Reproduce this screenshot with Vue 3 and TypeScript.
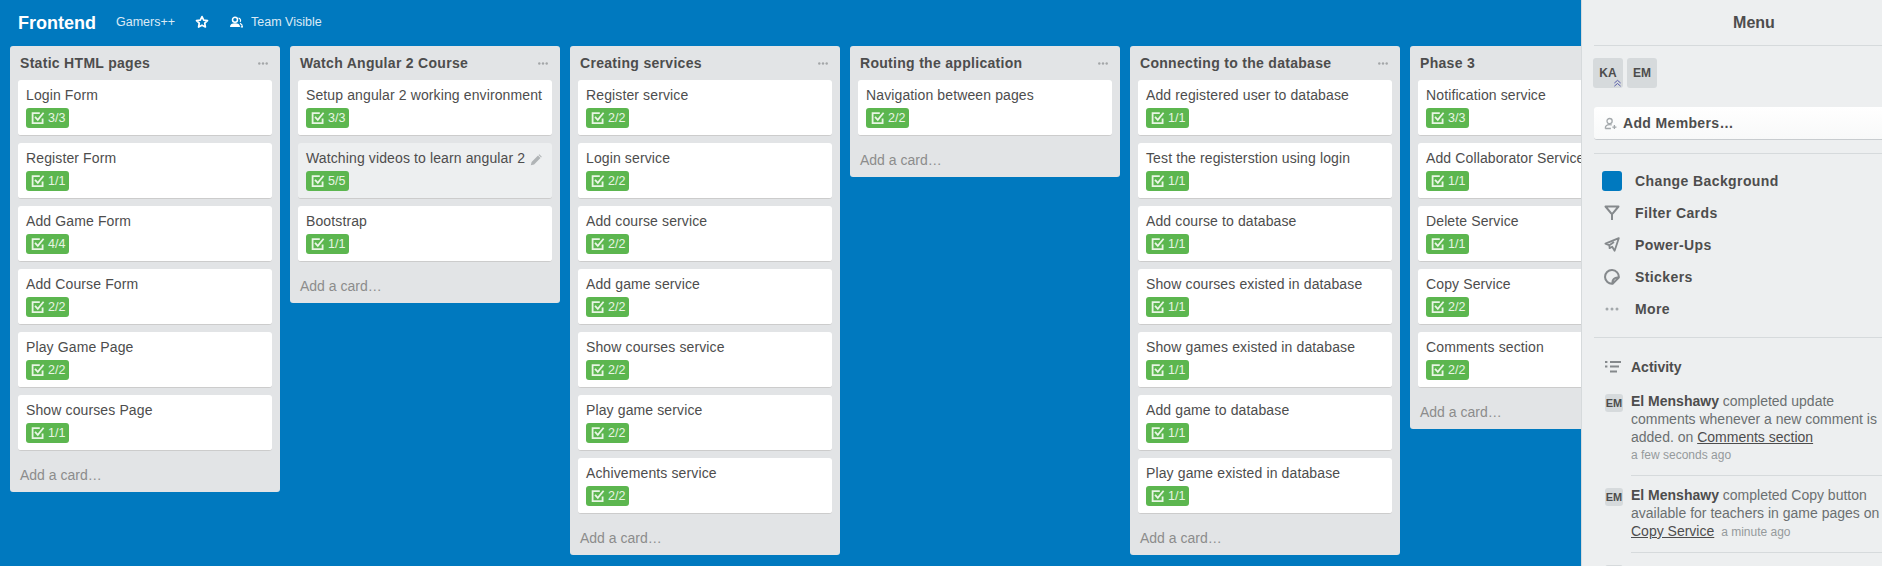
<script setup lang="ts">
interface Card { title: string; badge: string; hover?: boolean }
interface List { name: string; cards: Card[] }
const c = (title: string, badge: string, hover = false): Card => ({ title, badge, hover })
const lists: List[] = [
  { name: 'Static HTML pages', cards: [c('Login Form', '3/3'), c('Register Form', '1/1'), c('Add Game Form', '4/4'), c('Add Course Form', '2/2'), c('Play Game Page', '2/2'), c('Show courses Page', '1/1')] },
  { name: 'Watch Angular 2 Course', cards: [c('Setup angular 2 working environment', '3/3'), c('Watching videos to learn angular 2', '5/5', true), c('Bootstrap', '1/1')] },
  { name: 'Creating services', cards: [c('Register service', '2/2'), c('Login service', '2/2'), c('Add course service', '2/2'), c('Add game service', '2/2'), c('Show courses service', '2/2'), c('Play game service', '2/2'), c('Achivements service', '2/2')] },
  { name: 'Routing the application', cards: [c('Navigation between pages', '2/2')] },
  { name: 'Connecting to the database', cards: [c('Add registered user to database', '1/1'), c('Test the registerstion using login', '1/1'), c('Add course to database', '1/1'), c('Show courses existed in database', '1/1'), c('Show games existed in database', '1/1'), c('Add game to database', '1/1'), c('Play game existed in database', '1/1')] },
  { name: 'Phase 3', cards: [c('Notification service', '3/3'), c('Add Collaborator Service', '1/1'), c('Delete Service', '1/1'), c('Copy Service', '2/2'), c('Comments section', '2/2')] },
]
const menuItems = ['Filter Cards', 'Power-Ups', 'Stickers', 'More']
</script>

<template>
  <div class="page">
    <header class="bar">
      <span class="board-name">Frontend</span>
      <span class="bar-link">Gamers++</span>
      <svg class="star" viewBox="0 0 14 14" width="14" height="14"><path d="M7 1.6l1.7 3.5 3.8.5-2.8 2.6.7 3.8L7 10.2l-3.4 1.8.7-3.8L1.5 5.6l3.8-.5z" fill="none" stroke="#fff" stroke-width="1.7" stroke-linejoin="round"/></svg>
      <svg class="team" viewBox="0 0 14 14" width="14" height="14"><path d="M9.5 3.2a2.3 2.3 0 0 1 1.6 3.6M11 8.4c1.4.5 2.3 1.6 2.4 3.4h-1.6" fill="none" stroke="#fff" stroke-width="1.2"/><circle cx="6" cy="4.8" r="2.5" fill="none" stroke="#fff" stroke-width="1.5"/><path d="M1 12c0-2.8 2-3.8 5-3.8s5 1 5 3.8z" fill="#fff"/></svg>
      <span class="bar-link">Team Visible</span>
    </header>

    <main class="board">
      <section v-for="list in lists" :key="list.name" class="list">
        <div class="list-head">
          <h2>{{ list.name }}</h2>
          <svg class="dots" viewBox="0 0 10 3" width="10" height="3"><circle cx="1.3" cy="1.5" r="1.2"/><circle cx="5" cy="1.5" r="1.2"/><circle cx="8.7" cy="1.5" r="1.2"/></svg>
        </div>
        <article v-for="card in list.cards" :key="card.title" class="card" :class="{ hover: card.hover }">
          <div class="card-title">{{ card.title }}</div>
          <svg v-if="card.hover" class="pencil" viewBox="0 0 12 12" width="12" height="12"><path d="M.8 11.2l.8-3.3 6.4-6.4 2.5 2.5-6.4 6.4zM8.6.9l.7-.7 2.5 2.5-.7.7z" fill="#b0b4b6"/></svg>
          <span class="badge">
            <svg viewBox="0 0 14 14" width="14" height="14"><path d="M11.6 7.4v4.7H1.6V2.2h7.2" fill="none" stroke="#e8f5e4" stroke-width="1.8"/><path d="M4 5.8l2.8 3 5.8-7" fill="none" stroke="#e8f5e4" stroke-width="1.8"/></svg>
            <span>{{ card.badge }}</span>
          </span>
        </article>
        <div class="add">Add a card…</div>
      </section>
    </main>

    <aside class="menu">
      <div class="menu-title">Menu</div>
      <div class="members">
        <div class="avatar">KA
          <svg class="admin" viewBox="0 0 10 10" width="9" height="9"><path d="M1.5 4.5L5 1.5l3.5 3M1.5 8L5 5l3.5 3" fill="none" stroke="#4a4fa5" stroke-width="1"/></svg>
        </div>
        <div class="avatar">EM</div>
      </div>
      <div class="add-members">
        <svg viewBox="0 0 14 14" width="13" height="13"><circle cx="6" cy="4.4" r="2.8" fill="none" stroke="#a3a8ab" stroke-width="1.4"/><path d="M1.4 12.4c0-2.9 1.7-4.2 4.6-4.2 1 0 1.7.1 2.4.4M1.4 12.4h6M9 10.8h4.4M11.2 8.7v4.3" fill="none" stroke="#a3a8ab" stroke-width="1.4"/></svg>
        <span>Add Members…</span>
      </div>
      <div class="rule"></div>
      <nav class="items">
        <div class="item"><span class="swatch"></span><span>Change Background</span></div>
        <div v-for="item in menuItems" :key="item" class="item">
          <span class="icon">
            <svg v-if="item === 'Filter Cards'" viewBox="0 0 16 16" width="16" height="16"><path d="M1.5 1.5h13L8.8 8.4H7.2zM8 8.4v6.6" fill="none" stroke="#85898c" stroke-width="2" stroke-linejoin="round"/></svg>
            <svg v-else-if="item === 'Power-Ups'" viewBox="0 0 16 16" width="16" height="16"><path d="M14.8 1.2L1.4 6.6l3.8 1.6.5 3-.1 0 2.6-1.4 2.4 4z M5.4 8.2l4.6-3.2" fill="none" stroke="#85898c" stroke-width="1.8" stroke-linejoin="round"/></svg>
            <svg v-else-if="item === 'Stickers'" viewBox="0 0 16 16" width="16" height="16"><path d="M8.6 14.8A6.9 6.9 0 1 1 14.8 8.6zM8.6 14.8C7.8 10.8 10.6 8 14.8 8.6" fill="none" stroke="#85898c" stroke-width="2" stroke-linejoin="round"/></svg>
            <svg v-else viewBox="0 0 14 4" width="14" height="4"><circle cx="2" cy="2" r="1.5" fill="#a3a8ab"/><circle cx="7" cy="2" r="1.5" fill="#a3a8ab"/><circle cx="12" cy="2" r="1.5" fill="#a3a8ab"/></svg>
          </span>
          <span>{{ item }}</span>
        </div>
      </nav>
      <div class="rule rule-more"></div>
      <div class="activity-head">
        <svg viewBox="0 0 16 14" width="16" height="14"><path d="M0 2h2.4M5 2h11M0 6.6h2.4M5 6.6h9M5 11.4h7" stroke="#85898c" stroke-width="2" fill="none"/></svg>
        <span>Activity</span>
      </div>
      <div class="entry">
        <span class="mini">EM</span>
        <div class="entry-body">
          <b>El Menshawy</b> completed update comments whenever a new comment is added. on <u>Comments section</u>
          <div class="when">a few seconds ago</div>
        </div>
      </div>
      <div class="entry second">
        <span class="mini">EM</span>
        <div class="entry-body">
          <b>El Menshawy</b> completed Copy button available for teachers in game pages on <u>Copy Service</u> <span class="when-inline">a minute ago</span>
        </div>
      </div>
      <div class="entry third"><span class="mini"></span></div>
    </aside>
  </div>
</template>

<style>
html, body { margin: 0; height: 100%; overflow: hidden; }
</style>

<style scoped>
.page {
  position: relative;
  width: 1882px;
  height: 566px;
  overflow: hidden;
  background: #0079bf;
  font-family: "Liberation Sans", Arial, sans-serif;
  color: #4d4d4d;
}
.bar {
  display: flex;
  align-items: center;
  height: 46px;
  padding-left: 18px;
  color: #fff;
}
.board-name { font-size: 18px; font-weight: 700; margin-right: 20px; margin-top: 1px; }
.bar-link { font-size: 12.5px; opacity: .85; margin-top: -3px; }
.star { margin: -2px 20px 0 20px; }
.team { margin: -2px 8px 0 0; }
.board {
  display: flex;
  align-items: flex-start;
  gap: 10px;
  padding-left: 10px;
}
.list {
  flex: 0 0 270px;
  box-sizing: border-box;
  background: #e2e4e6;
  border-radius: 3px;
  padding: 0 8px 0;
}
.list-head {
  display: flex;
  justify-content: space-between;
  align-items: center;
  height: 34px;
  padding: 0 4px 0 2px;
}
.list-head h2 { margin: 0; font-size: 14px; font-weight: 700; color: #4d4d4d; line-height: 34px; letter-spacing: .3px; }
.dots { fill: #a3a6a8; }
.card {
  position: relative;
  box-sizing: border-box;
  height: 56px;
  margin-bottom: 7px;
  padding: 6px 8px 0;
  background: #fff;
  border-radius: 3px;
  border-bottom: 1px solid #ccc;
}
.card.hover { background: #edeff0; }
.card-title { font-size: 14px; line-height: 18px; color: #4d4d4d; white-space: nowrap; margin-bottom: 4px; letter-spacing: .12px; }
.pencil { position: absolute; right: 10px; top: 11px; }
.badge {
  display: inline-flex;
  align-items: center;
  gap: 3px;
  box-sizing: border-box;
  width: 43px;
  height: 20px;
  padding-left: 5px;
  background: #5cb64f;
  border-radius: 3px;
  color: #e8f5e4;
  font-size: 12.5px;
}
.add { height: 34px; padding: 7px 2px 0; box-sizing: border-box; font-size: 14px; line-height: 20px; color: #8c8c8c; }
.menu {
  position: absolute;
  top: 0;
  left: 1581px;
  width: 345px;
  height: 566px;
  box-sizing: border-box;
  padding: 0 12px;
  background: #edeff0;
  border-left: 1px solid #d6dadc;
  overflow: hidden;
}
.menu-title {
  height: 45px;
  line-height: 45px;
  border-bottom: 1px solid #d6dadc;
  text-align: center;
  font-size: 16px;
  font-weight: 700;
}
.members { display: flex; gap: 4px; padding-top: 12px; margin-left: -1px; }
.avatar {
  position: relative;
  width: 30px;
  height: 30px;
  border-radius: 3px;
  background: #d6dadc;
  font-size: 12px;
  font-weight: 700;
  line-height: 30px;
  text-align: center;
  color: #4d4d4d;
}
.admin { position: absolute; right: 1px; bottom: 0; }
.add-members {
  display: flex;
  align-items: center;
  gap: 6px;
  box-sizing: border-box;
  height: 33px;
  margin-top: 19px;
  padding-left: 10px;
  background: linear-gradient(#fff, #f8f9f9);
  border-bottom: 1px solid #c8cccf;
  border-radius: 3px;
  font-size: 14px;
  font-weight: 700;
  letter-spacing: .35px;
}
.rule { height: 1px; background: #d6dadc; margin-top: 13px; }
.items { padding-top: 11px; }
.item { display: flex; align-items: center; height: 32px; padding-left: 8px; font-size: 14px; font-weight: 700; letter-spacing: .4px; gap: 13px; }
.swatch { width: 20px; height: 20px; border-radius: 3px; background: #0079bf; flex: none; }
.icon { width: 20px; display: flex; justify-content: center; flex: none; }
.rule-more { margin-top: 12px; }
.activity-head { display: flex; align-items: center; gap: 10px; padding: 20px 0 0 11px; height: 17px; font-size: 14px; font-weight: 700; }
.entry { position: relative; padding: 17px 0 0 37px; width: 252px; }
.entry-body { font-size: 14px; line-height: 18px; color: #6b6f71; }
.entry-body b, .entry-body u { color: #4d4d4d; }
.mini {
  position: absolute;
  left: 11px;
  top: 19px;
  width: 18px;
  height: 18px;
  border-radius: 3px;
  background: #d6dadc;
  color: #4d4d4d;
  font-size: 11px;
  font-weight: 700;
  line-height: 18px;
  text-align: center;
}
.when { font-size: 12px; color: #959a9c; line-height: 18px; }
.when-inline { font-size: 12px; color: #959a9c; margin-left: 3px; }
.second { margin-top: 11px; padding-top: 11px; }
.second .mini { top: 13px; }
.second::before, .third::before { content: ""; position: absolute; left: 37px; right: -10px; top: 0; height: 1px; background: #d6dadc; }
.third { margin-top: 11px; height: 40px; }
.third .mini { top: 13px; }
</style>
